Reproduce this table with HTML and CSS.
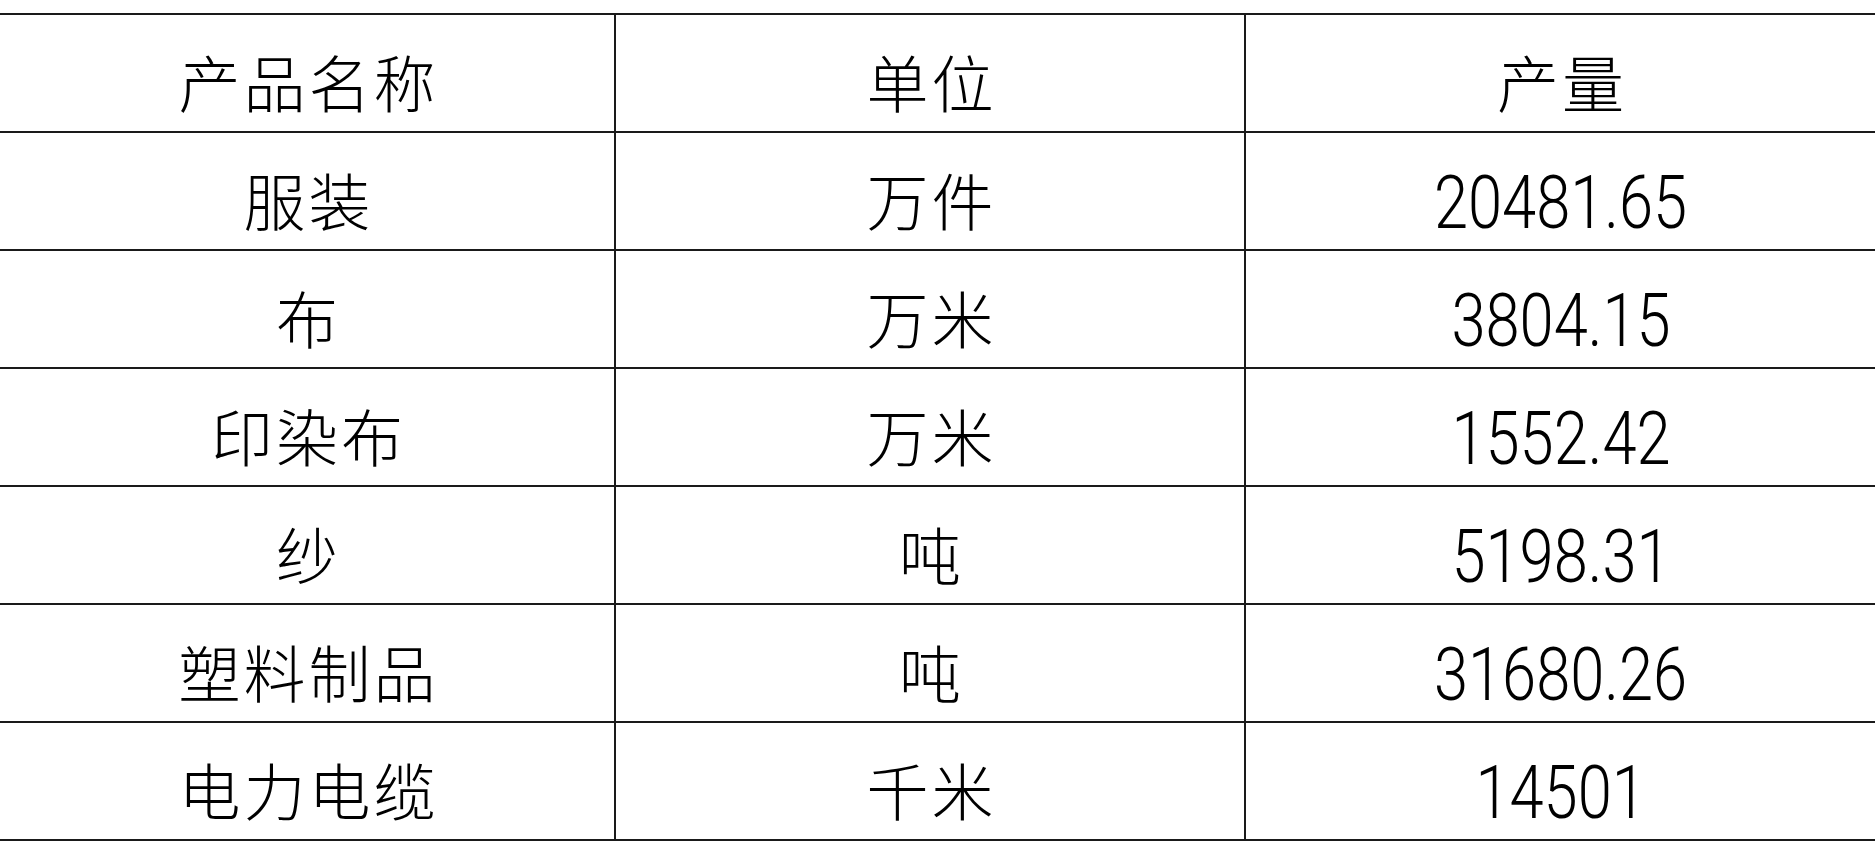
FILE: index.html
```html
<!DOCTYPE html>
<html lang="zh-CN">
<head>
<meta charset="utf-8">
<link rel="stylesheet" href="styles.css">
</head>
<body>
<table class="data">
  <colgroup><col class="c1"><col class="c2"><col class="c3"></colgroup>
  <tr><td class="zh">产品名称</td><td class="zh">单位</td><td class="zh">产量</td></tr>
  <tr><td class="zh">服装</td><td class="zh">万件</td><td class="num"><span>20481.65</span></td></tr>
  <tr><td class="zh">布</td><td class="zh">万米</td><td class="num"><span>3804.15</span></td></tr>
  <tr><td class="zh">印染布</td><td class="zh">万米</td><td class="num"><span>1552.42</span></td></tr>
  <tr><td class="zh">纱</td><td class="zh">吨</td><td class="num"><span>5198.31</span></td></tr>
  <tr><td class="zh">塑料制品</td><td class="zh">吨</td><td class="num"><span>31680.26</span></td></tr>
  <tr><td class="zh">电力电缆</td><td class="zh">千米</td><td class="num"><span>14501</span></td></tr>
</table>
</body>
</html>
```
FILE: styles.css
```css
html, body {
  margin: 0;
  padding: 0;
  background: #fff;
}
body {
  padding-top: 13px;
  overflow: hidden;
}
.data {
  width: 1875px;
  border-collapse: collapse;
  table-layout: fixed;
  color: #000;
}
.c1 { width: 615px; }
.c2 { width: 630px; }
.c3 { width: 630px; }
.data td {
  height: 118px;
  padding: 0;
  box-sizing: border-box;
  text-align: center;
  vertical-align: middle;
  border-top: 2px solid #1a1a1a;
  border-bottom: 2px solid #1a1a1a;
  border-left: 2px solid #1a1a1a;
}
.data td:first-child { border-left: none; }
.zh {
  padding-top: 16px !important;
  font-family: "Noto Sans CJK SC", sans-serif;
  font-weight: 300;
  font-size: 62px;
  letter-spacing: 3px;
  text-indent: 3px;
  line-height: 1;
}
.num {
  padding-top: 24px !important;
  font-family: Roboto, "Liberation Sans", sans-serif;
  font-weight: 300;
  font-size: 74px;
  line-height: 1;
}
.num span {
  display: inline-block;
  transform: scaleX(0.83);
}
```
